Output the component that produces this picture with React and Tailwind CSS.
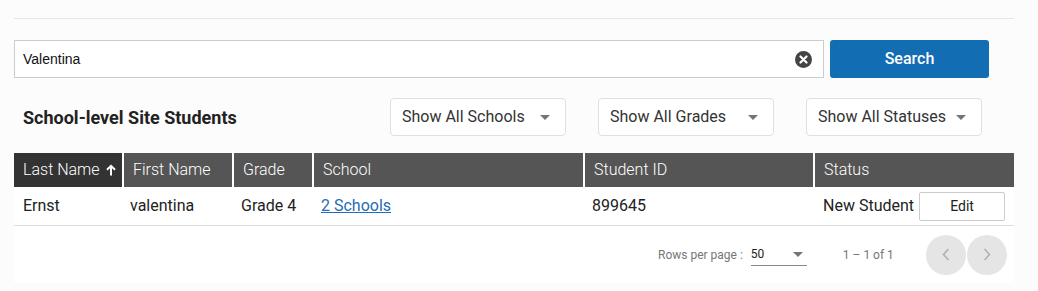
import { useState } from "react";

const COLUMNS = [
  { key: "last", label: "Last Name", sorted: true },
  { key: "first", label: "First Name" },
  { key: "grade", label: "Grade" },
  { key: "school", label: "School" },
  { key: "id", label: "Student ID" },
  { key: "status", label: "Status" },
];

const FILTERS = ["Show All Schools", "Show All Grades", "Show All Statuses"];

const GRID = "grid grid-cols-[108px_108px_78px_269px_228px_1fr] gap-x-[2px]";

const Caret = () => (
  <svg width="10" height="5" viewBox="0 0 10 5" className="fill-[#757575]">
    <path d="M0 0h10L5 5z" />
  </svg>
);

export default function App() {
  const [query, setQuery] = useState("Valentina");

  return (
    <div className="min-h-[291px] bg-[#fcfcfc] px-[14px] pt-[18px] font-['Roboto',sans-serif] text-[#222]">
      <div className="w-[1000px] border-t border-[#e6e6e6]" />

      <div className="mt-[21px] flex gap-[6px]">
        <div className="flex h-[38px] w-[810px] items-center border border-[#cccccc] bg-white pl-[8px] pr-[11px]">
          <input
            value={query}
            onChange={(e) => setQuery(e.target.value)}
            className="flex-1 bg-transparent font-['Liberation_Sans',Arial,sans-serif] text-[14px] text-[#111] outline-none"
          />
          <button
            onClick={() => setQuery("")}
            className="flex h-[17px] w-[17px] items-center justify-center rounded-full bg-[#444]"
          >
            <svg width="9" height="9" viewBox="0 0 9 9" className="stroke-white" strokeWidth="2.2" strokeLinecap="round">
              <path d="M1.5 1.5l6 6M7.5 1.5l-6 6" />
            </svg>
          </button>
        </div>
        <button className="h-[38px] w-[159px] rounded-[3px] bg-[#136db3] text-[16px] font-medium text-white">
          Search
        </button>
      </div>

      <div className="mt-[20px] flex items-center">
        <h2 className="w-[376px] pl-[9px] text-[18px] font-bold text-[#222]">School-level Site Students</h2>
        <div className="flex gap-[32px]">
          {FILTERS.map((f) => (
            <button
              key={f}
              className="flex h-[38px] w-[176px] items-center justify-between rounded-[4px] border border-[#e0e0e0] bg-white pl-[11px] pr-[15px] text-[16px] text-[#333]"
            >
              {f}
              <Caret />
            </button>
          ))}
        </div>
      </div>

      <div className="mt-[17px] w-[1000px] bg-white">
        <div className={GRID}>
          {COLUMNS.map((c) => (
            <div
              key={c.key}
              className={`flex h-[34px] items-center gap-[6px] pl-[9px] text-[16px] font-light text-white ${
                c.sorted ? "bg-[#333333]" : "bg-[#555555]"
              }`}
            >
              {c.label}
              {c.sorted && (
                <svg width="10" height="12" viewBox="0 0 10 12" className="stroke-white" strokeWidth="2" fill="none">
                  <path d="M5 11.5V2M1 5.8L5 1.8 9 5.8" />
                </svg>
              )}
            </div>
          ))}
        </div>
        <div className={`${GRID} h-[39px] items-center border-b border-[#dddddd] text-[16px] text-[#222]`}>
          <div className="pl-[9px]">Ernst</div>
          <div className="pl-[6px]">valentina</div>
          <div className="pl-[7px]">Grade 4</div>
          <div className="pl-[7px]">
            <a href="#" className="text-[#1f6db4] underline">2 Schools</a>
          </div>
          <div className="pl-[7px]">899645</div>
          <div className="flex items-center pl-[8px]">
            <span>New Student</span>
            <button className="ml-[5px] h-[29px] w-[86px] rounded-[2px] border border-[#cccccc] bg-white text-[14px] text-[#222]">
              Edit
            </button>
          </div>
        </div>

        <div className="flex h-[57px] items-center pl-[644px] text-[12px] text-[#777]">
          <span>Rows per page :</span>
          <div className="ml-[8px] flex h-[22px] w-[56px] items-center justify-between border-b border-[#888] pr-[4px] text-[#222]">
            <span>50</span>
            <Caret />
          </div>
          <span className="ml-[36px]">1 – 1 of 1</span>
          <div className="ml-[32px] flex">
            <button className="flex h-[40px] w-[40px] items-center justify-center rounded-full bg-[#e5e5e5]">
              <svg width="8" height="13" viewBox="0 0 8 13" fill="none" className="stroke-[#b0b0b0]" strokeWidth="1.6">
                <path d="M6.5 1L1.5 6.5 6.5 12" />
              </svg>
            </button>
            <button className="ml-[1px] flex h-[40px] w-[40px] items-center justify-center rounded-full bg-[#e5e5e5]">
              <svg width="8" height="13" viewBox="0 0 8 13" fill="none" className="stroke-[#b0b0b0]" strokeWidth="1.6">
                <path d="M1.5 1L6.5 6.5 1.5 12" />
              </svg>
            </button>
          </div>
        </div>
      </div>
    </div>
  );
}
